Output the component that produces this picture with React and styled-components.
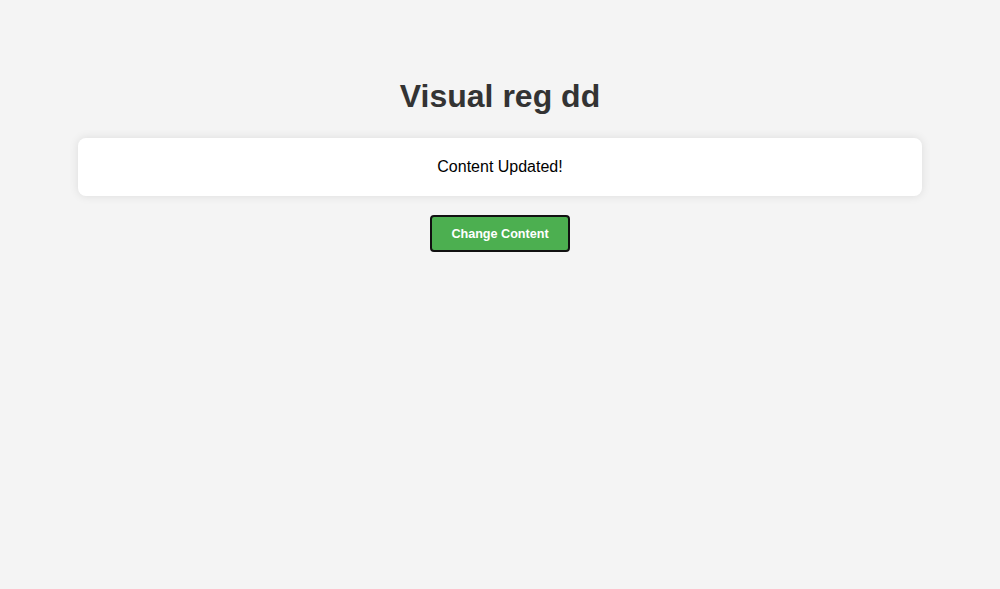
import React, { useState } from 'react';
import styled, { createGlobalStyle } from 'styled-components';

const GlobalStyle = createGlobalStyle`
  html, body {
    margin: 0;
    padding: 0;
    background-color: #f4f4f4;
    font-family: Arial, "Liberation Sans", sans-serif;
  }
`;

const Page = styled.div`
  min-height: 589px;
  padding: 78px 78px 0;
  box-sizing: border-box;
  display: flex;
  flex-direction: column;
  align-items: center;
`;

const Title = styled.h1`
  margin: 0 0 23px;
  font-size: 32px;
  line-height: 37px;
  font-weight: bold;
  color: #333;
  text-align: center;
`;

const Card = styled.div`
  width: 100%;
  box-sizing: border-box;
  padding: 20px;
  background-color: #fff;
  border-radius: 8px;
  box-shadow: 0 0 10px rgba(0, 0, 0, 0.1);
  text-align: center;
  font-size: 16px;
  line-height: 18px;
  color: #000;
`;

const Button = styled.button`
  margin-top: 19px;
  box-sizing: border-box;
  width: 140px;
  height: 37px;
  padding: 0;
  background-color: #4caf50;
  color: #fff;
  border: 2px solid #111;
  border-radius: 4px;
  font-family: Arial, "Liberation Sans", sans-serif;
  font-size: 12.6px;
  font-weight: bold;
  white-space: nowrap;
  cursor: pointer;
`;

export default function App() {
  const [content, setContent] = useState('Content Updated!');

  return (
    <>
      <GlobalStyle />
      <Page>
        <Title>Visual reg dd</Title>
        <Card>{content}</Card>
        <Button onClick={() => setContent('Content Updated!')}>Change Content</Button>
      </Page>
    </>
  );
}
